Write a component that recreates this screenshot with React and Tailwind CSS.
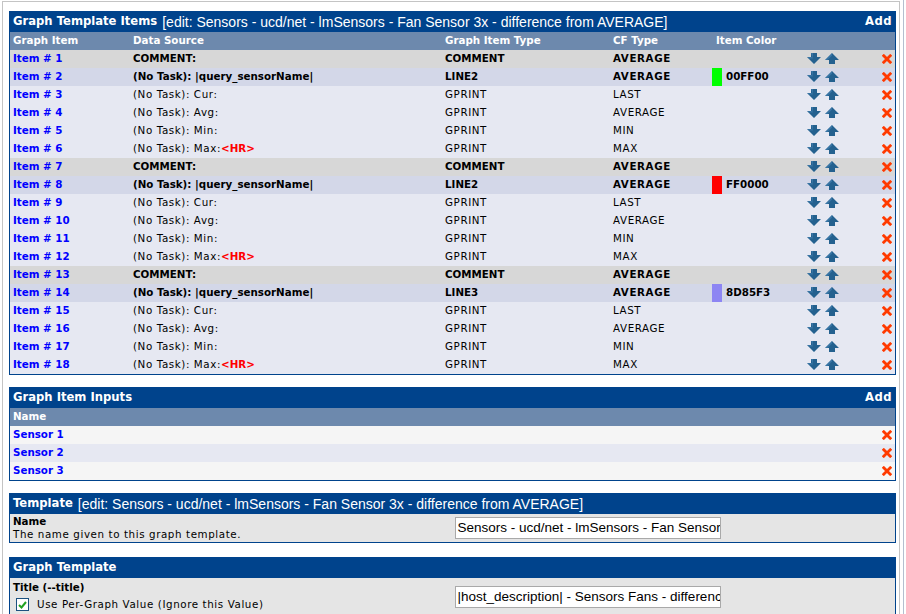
import React from "react";

const items = [
  { n: 1, ds: "COMMENT:", type: "COMMENT", cf: "AVERAGE", kind: "comment" },
  { n: 2, ds: "(No Task): |query_sensorName|", type: "LINE2", cf: "AVERAGE", kind: "line", color: "#00FF00", hex: "00FF00" },
  { n: 3, ds: "(No Task): Cur:", type: "GPRINT", cf: "LAST" },
  { n: 4, ds: "(No Task): Avg:", type: "GPRINT", cf: "AVERAGE" },
  { n: 5, ds: "(No Task): Min:", type: "GPRINT", cf: "MIN" },
  { n: 6, ds: "(No Task): Max:", type: "GPRINT", cf: "MAX", hr: true },
  { n: 7, ds: "COMMENT:", type: "COMMENT", cf: "AVERAGE", kind: "comment" },
  { n: 8, ds: "(No Task): |query_sensorName|", type: "LINE2", cf: "AVERAGE", kind: "line", color: "#FF0000", hex: "FF0000" },
  { n: 9, ds: "(No Task): Cur:", type: "GPRINT", cf: "LAST" },
  { n: 10, ds: "(No Task): Avg:", type: "GPRINT", cf: "AVERAGE" },
  { n: 11, ds: "(No Task): Min:", type: "GPRINT", cf: "MIN" },
  { n: 12, ds: "(No Task): Max:", type: "GPRINT", cf: "MAX", hr: true },
  { n: 13, ds: "COMMENT:", type: "COMMENT", cf: "AVERAGE", kind: "comment" },
  { n: 14, ds: "(No Task): |query_sensorName|", type: "LINE3", cf: "AVERAGE", kind: "line", color: "#8D85F3", hex: "8D85F3" },
  { n: 15, ds: "(No Task): Cur:", type: "GPRINT", cf: "LAST" },
  { n: 16, ds: "(No Task): Avg:", type: "GPRINT", cf: "AVERAGE" },
  { n: 17, ds: "(No Task): Min:", type: "GPRINT", cf: "MIN" },
  { n: 18, ds: "(No Task): Max:", type: "GPRINT", cf: "MAX", hr: true },
];

const DownArrow = () => (
  <svg width="14" height="11" viewBox="0 0 14 11">
    <path d="M4 0h6v4h4l-7 7-7-7h4z" fill="#24618f" />
    <path d="M4 0h2v4H0.5L2 5.5h4z" fill="#4a87b8" opacity="0.55" />
  </svg>
);

const UpArrow = () => (
  <svg width="14" height="11" viewBox="0 0 14 11">
    <path d="M4 11h6V7h4L7 0 0 7h4z" fill="#24618f" />
    <path d="M7 0 0 7h2.5L7 2.5z" fill="#4a87b8" opacity="0.55" />
  </svg>
);

const RedX = () => (
  <svg width="10" height="10" viewBox="0 0 10 10">
    <path d="M1.8 1.8l6.4 6.4M8.2 1.8l-6.4 6.4" stroke="#ff3a00" strokeWidth="2.8" strokeLinecap="square" />
  </svg>
);

const PanelTitle = ({ bold, rest, add }) => (
  <div className="h-[20px] bg-[#00438c] flex items-center px-[3px] text-white">
    <span className="font-bold text-[11.6px]">{bold}</span>
    {rest && (
      <span className="ml-[5px] text-[14px] font-['Liberation_Sans',sans-serif]">{rest}</span>
    )}
    {add && <span className="ml-auto font-bold text-[11.6px] tracking-[0.5px]">Add</span>}
  </div>
);

const b = "font-bold text-[10.3px]";
const nrm = "text-[10.3px] tracking-[0.6px]";

export default function App() {
  return (
    <div className="w-[906px] h-[614px] overflow-hidden bg-white flex font-['DejaVu_Sans',sans-serif] text-black">
      <div className="ml-[2px] mt-[1px] w-[898px] h-[640px] border-l border-t border-r border-[#c4c4c4] pl-[6px] pr-[3px] pt-[9px]">
        {/* Graph Template Items */}
        <div className="border border-[#00438c] mb-[12px]">
          <PanelTitle
            bold="Graph Template Items"
            rest="[edit: Sensors - ucd/net - lmSensors - Fan Sensor 3x - difference from AVERAGE]"
            add
          />
          <div className={`h-[18px] bg-[#6d89ad] flex items-center text-white ${b}`}>
            <div className="w-[120px] pl-[3px]">Graph Item</div>
            <div className="w-[312px] pl-[3px]">Data Source</div>
            <div className="w-[168px] pl-[3px]">Graph Item Type</div>
            <div className="w-[99px] pl-[3px]">CF Type</div>
            <div className="w-[95px] pl-[7px]">Item Color</div>
          </div>
          {items.map((it) => {
            const strong = it.kind === "comment" || it.kind === "line";
            const bg =
              it.kind === "comment" ? "bg-[#d7d7d7]" : it.kind === "line" ? "bg-[#d3d7e8]" : "bg-[#e6e8f2]";
            const txt = strong ? b : nrm;
            return (
              <div key={it.n} className={`h-[18px] flex items-center ${bg}`}>
                <div className={`w-[120px] pl-[3px] text-[#0000ff] ${b}`}>Item # {it.n}</div>
                <div className={`w-[312px] pl-[3px] ${txt}`}>
                  {it.ds}
                  {it.hr && <span className="text-[#ff0000] font-bold tracking-normal">&lt;HR&gt;</span>}
                </div>
                <div className={`w-[168px] pl-[3px] ${txt}`}>{it.type}</div>
                <div className={`w-[99px] pl-[3px] ${strong ? b + " tracking-[0.6px]" : nrm}`}>{it.cf}</div>
                <div className="w-[95px] pl-[3px] h-full flex items-center">
                  {it.color && (
                    <>
                      <div className="w-[10px] h-full" style={{ backgroundColor: it.color }} />
                      <span className={`ml-[4px] ${b}`}>{it.hex}</span>
                    </>
                  )}
                </div>
                <div className="pl-[3px] flex items-center gap-[4px] -mt-[2px]">
                  <DownArrow />
                  <UpArrow />
                </div>
                <div className="ml-auto pr-[3px] flex items-center">
                  <RedX />
                </div>
              </div>
            );
          })}
        </div>

        {/* Graph Item Inputs */}
        <div className="border border-[#00438c] mb-[12px]">
          <PanelTitle bold="Graph Item Inputs" add />
          <div className={`h-[18px] bg-[#6d89ad] flex items-center text-white pl-[3px] ${b}`}>Name</div>
          {["Sensor 1", "Sensor 2", "Sensor 3"].map((s, i) => (
            <div
              key={s}
              className={`h-[18px] flex items-center px-[3px] ${i % 2 ? "bg-[#e6e8f2]" : "bg-[#f5f5f5]"}`}
            >
              <span className={`text-[#0000ff] ${b}`}>{s}</span>
              <span className="ml-auto">
                <RedX />
              </span>
            </div>
          ))}
        </div>

        {/* Template */}
        <div className="border border-[#00438c] mb-[14px]">
          <PanelTitle
            bold="Template"
            rest="[edit: Sensors - ucd/net - lmSensors - Fan Sensor 3x - difference from AVERAGE]"
          />
          <div className="h-[28px] bg-[#e5e5e5] flex">
            <div className="w-1/2 pl-[3px] pt-[1px] leading-[13px]">
              <div className={b}>Name</div>
              <div className={nrm}>The name given to this graph template.</div>
            </div>
            <div className="w-1/2 pl-[2px] pt-[3px]">
              <div className="w-[266px] h-[22px] bg-white border border-[#a9a9a9] px-[2px] flex items-center overflow-hidden whitespace-nowrap text-[13.5px] font-['Liberation_Sans',sans-serif]">
                Sensors - ucd/net - lmSensors - Fan Sensor 3x - difference from AVERAGE
              </div>
            </div>
          </div>
        </div>

        {/* Graph Template */}
        <div className="border border-[#00438c]">
          <PanelTitle bold="Graph Template" />
          <div className="h-[60px] bg-[#e5e5e5] flex">
            <div className="w-1/2 pl-[3px] pt-[3px]">
              <div className={`${b} leading-[13px]`}>Title (--title)</div>
              <div className="flex items-center mt-[3px] ml-[3px]">
                <div className="w-[13px] h-[13px] border border-[#1c5180] bg-white flex items-center justify-center">
                  <svg width="9" height="8" viewBox="0 0 9 8">
                    <path d="M1 4l2.5 2.5L8 1" stroke="#21a121" strokeWidth="2" fill="none" />
                  </svg>
                </div>
                <span className={`ml-[8px] ${nrm}`}>Use Per-Graph Value (Ignore this Value)</span>
              </div>
            </div>
            <div className="w-1/2 pl-[2px] pt-[8px]">
              <div className="w-[266px] h-[22px] bg-white border border-[#a9a9a9] px-[2px] flex items-center overflow-hidden whitespace-nowrap text-[13.5px] font-['Liberation_Sans',sans-serif]">
                |host_description| - Sensors Fans - difference from AVERAGE
              </div>
            </div>
          </div>
        </div>
      </div>
      <div className="ml-[3px] w-[1px] h-full bg-[#b4bfcf]" />
    </div>
  );
}
